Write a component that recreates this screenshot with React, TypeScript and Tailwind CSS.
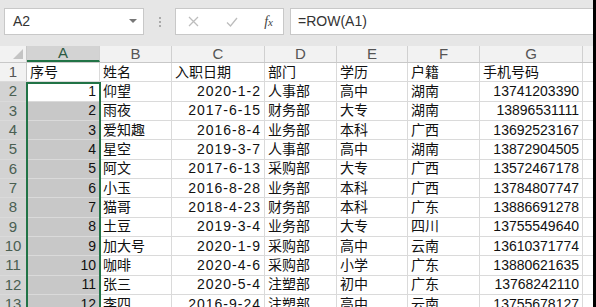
import React from 'react'

const rows: string[][] = [
  ['1', '仰望', '2020-1-2', '人事部', '高中', '湖南', '13741203390'],
  ['2', '雨夜', '2017-6-15', '财务部', '大专', '湖南', '13896531111'],
  ['3', '爱知趣', '2016-8-4', '业务部', '本科', '广西', '13692523167'],
  ['4', '星空', '2019-3-7', '人事部', '高中', '湖南', '13872904505'],
  ['5', '阿文', '2017-6-13', '采购部', '大专', '广西', '13572467178'],
  ['6', '小玉', '2016-8-28', '业务部', '本科', '广西', '13784807747'],
  ['7', '猫哥', '2018-4-23', '财务部', '本科', '广东', '13886691278'],
  ['8', '土豆', '2019-3-4', '业务部', '大专', '四川', '13755549640'],
  ['9', '加大号', '2020-1-9', '采购部', '高中', '云南', '13610371774'],
  ['10', '咖啡', '2020-4-6', '采购部', '小学', '广东', '13880621635'],
  ['11', '张三', '2020-5-4', '注塑部', '初中', '广东', '13768242110'],
  ['12', '李四', '2016-9-24', '注塑部', '高中', '云南', '13755678127'],
]

const headers = ['序号', '姓名', '入职日期', '部门', '学历', '户籍', '手机号码']
const letters = ['A', 'B', 'C', 'D', 'E', 'F', 'G']
const widths = ['w-[73px]', 'w-[72px]', 'w-[93px]', 'w-[72px]', 'w-[71px]', 'w-[72px]', 'w-[103px]']

const cellBase = 'h-full shrink-0 border-r border-[#dadada] flex items-center overflow-hidden whitespace-nowrap'

function Toolbar() {
  return (
    <div className="h-[46px] bg-[#e6e6e6] flex pt-[8px] pl-[4px] shrink-0">
      {/* Name box */}
      <div className="w-[140px] h-[27px] bg-white border border-[#c8c8c8] flex items-center justify-between pl-[8px] pr-[6px] text-[14px] text-[#333]">
        <span>A2</span>
        <svg width="8" height="5" viewBox="0 0 8 5">
          <path d="M0 0 L8 0 L4 4 Z" fill="#777" />
        </svg>
      </div>
      <div className="w-[31px] h-[27px] flex flex-col items-center justify-center gap-[2px]">
        <span className="w-[2px] h-[2px] bg-[#aaa]" />
        <span className="w-[2px] h-[2px] bg-[#aaa]" />
        <span className="w-[2px] h-[2px] bg-[#aaa]" />
      </div>
      {/* Formula buttons */}
      <div className="w-[109px] h-[27px] bg-white border border-[#c8c8c8] flex items-center justify-between pl-[12px] pr-[10px]">
        <svg width="11" height="11" viewBox="0 0 11 11">
          <path d="M1 1 L10 10 M10 1 L1 10" stroke="#bdbdbd" strokeWidth="1.3" />
        </svg>
        <svg width="12" height="10" viewBox="0 0 12 10">
          <path d="M1 5.5 L4.5 9 L11 1" stroke="#bdbdbd" strokeWidth="1.3" fill="none" />
        </svg>
        <span className="font-['Liberation_Serif',serif] italic text-[14px] text-[#444] leading-none">
          f<span className="text-[11px]">x</span>
        </span>
      </div>
      {/* Formula input */}
      <div className="flex-1 ml-[6px] h-[27px] bg-white border border-[#c8c8c8] border-r-0 flex items-center pl-[7px] text-[14px] text-[#333]">
        =ROW(A1)
      </div>
    </div>
  )
}

function HeaderRow() {
  return (
    <div className="h-[17px] flex shrink-0 bg-[#f2f2f2] border-b border-[#c8c8c8] text-[15px] text-[#555]">
      <div className="w-[27px] h-full shrink-0 border-r border-[#c8c8c8] relative">
        <svg className="absolute right-[3px] bottom-[3px]" width="10" height="10" viewBox="0 0 10 10">
          <path d="M10 0 L10 10 L0 10 Z" fill="#c4c4c4" />
        </svg>
      </div>
      {letters.map((l, i) => (
        <div
          key={l}
          className={`${widths[i]} h-full shrink-0 border-r border-[#d0d0d0] flex items-center justify-center ${
            i === 0 ? 'bg-[#d3d3d3] border-b-2 border-b-[#217346] text-[#2c5a42]' : ''
          }`}
        >
          {l}
        </div>
      ))}
      <div className="flex-1 h-full" />
    </div>
  )
}

function DataRow({ num, cells, head }: { num: number; cells: string[]; head?: boolean }) {
  const selected = !head
  return (
    <div className="h-[19.33px] flex shrink-0 border-b border-[#dadada] text-[14px] text-[#111]">
      <div
        className={`w-[27px] h-full shrink-0 border-r border-[#c8c8c8] flex items-center justify-center text-[15px] ${
          selected ? 'bg-[#d3d3d3] text-[#4a5f52]' : 'bg-[#f2f2f2] text-[#555]'
        }`}
      >
        {num}
      </div>
      {cells.map((c, i) => {
        const isNum = !head && (i === 0 || i === 2 || i === 6)
        const bg = !head && i === 0 ? (num === 2 ? 'bg-white' : 'bg-[#c8c8c8]') : ''
        return (
          <div
            key={i}
            className={`${widths[i]} ${cellBase} ${bg} ${isNum ? 'justify-end pr-[3px]' : 'pl-[3px]'} ${
              !head && i === 2 ? 'tracking-[1px]' : ''
            }`}
          >
            {c}
          </div>
        )
      })}
      <div className="flex-1 h-full" />
    </div>
  )
}

export default function App() {
  return (
    <div className="w-[596px] h-[307px] overflow-hidden flex bg-white font-['Liberation_Sans','Noto_Sans_CJK_SC',sans-serif]">
      <div className="flex-1 flex flex-col min-w-0">
        <Toolbar />
        <div className="relative flex-1 flex flex-col">
          <HeaderRow />
          <DataRow num={1} cells={headers} head />
          {rows.map((r, i) => (
            <DataRow key={i} num={i + 2} cells={r} />
          ))}
          {/* selection outline for A2:A13 */}
          <div className="absolute left-[26px] top-[35.5px] w-[75px] h-[300px] border-2 border-[#217346] pointer-events-none" />
        </div>
      </div>
      <div className="w-[3px] bg-black shrink-0" />
    </div>
  )
}
